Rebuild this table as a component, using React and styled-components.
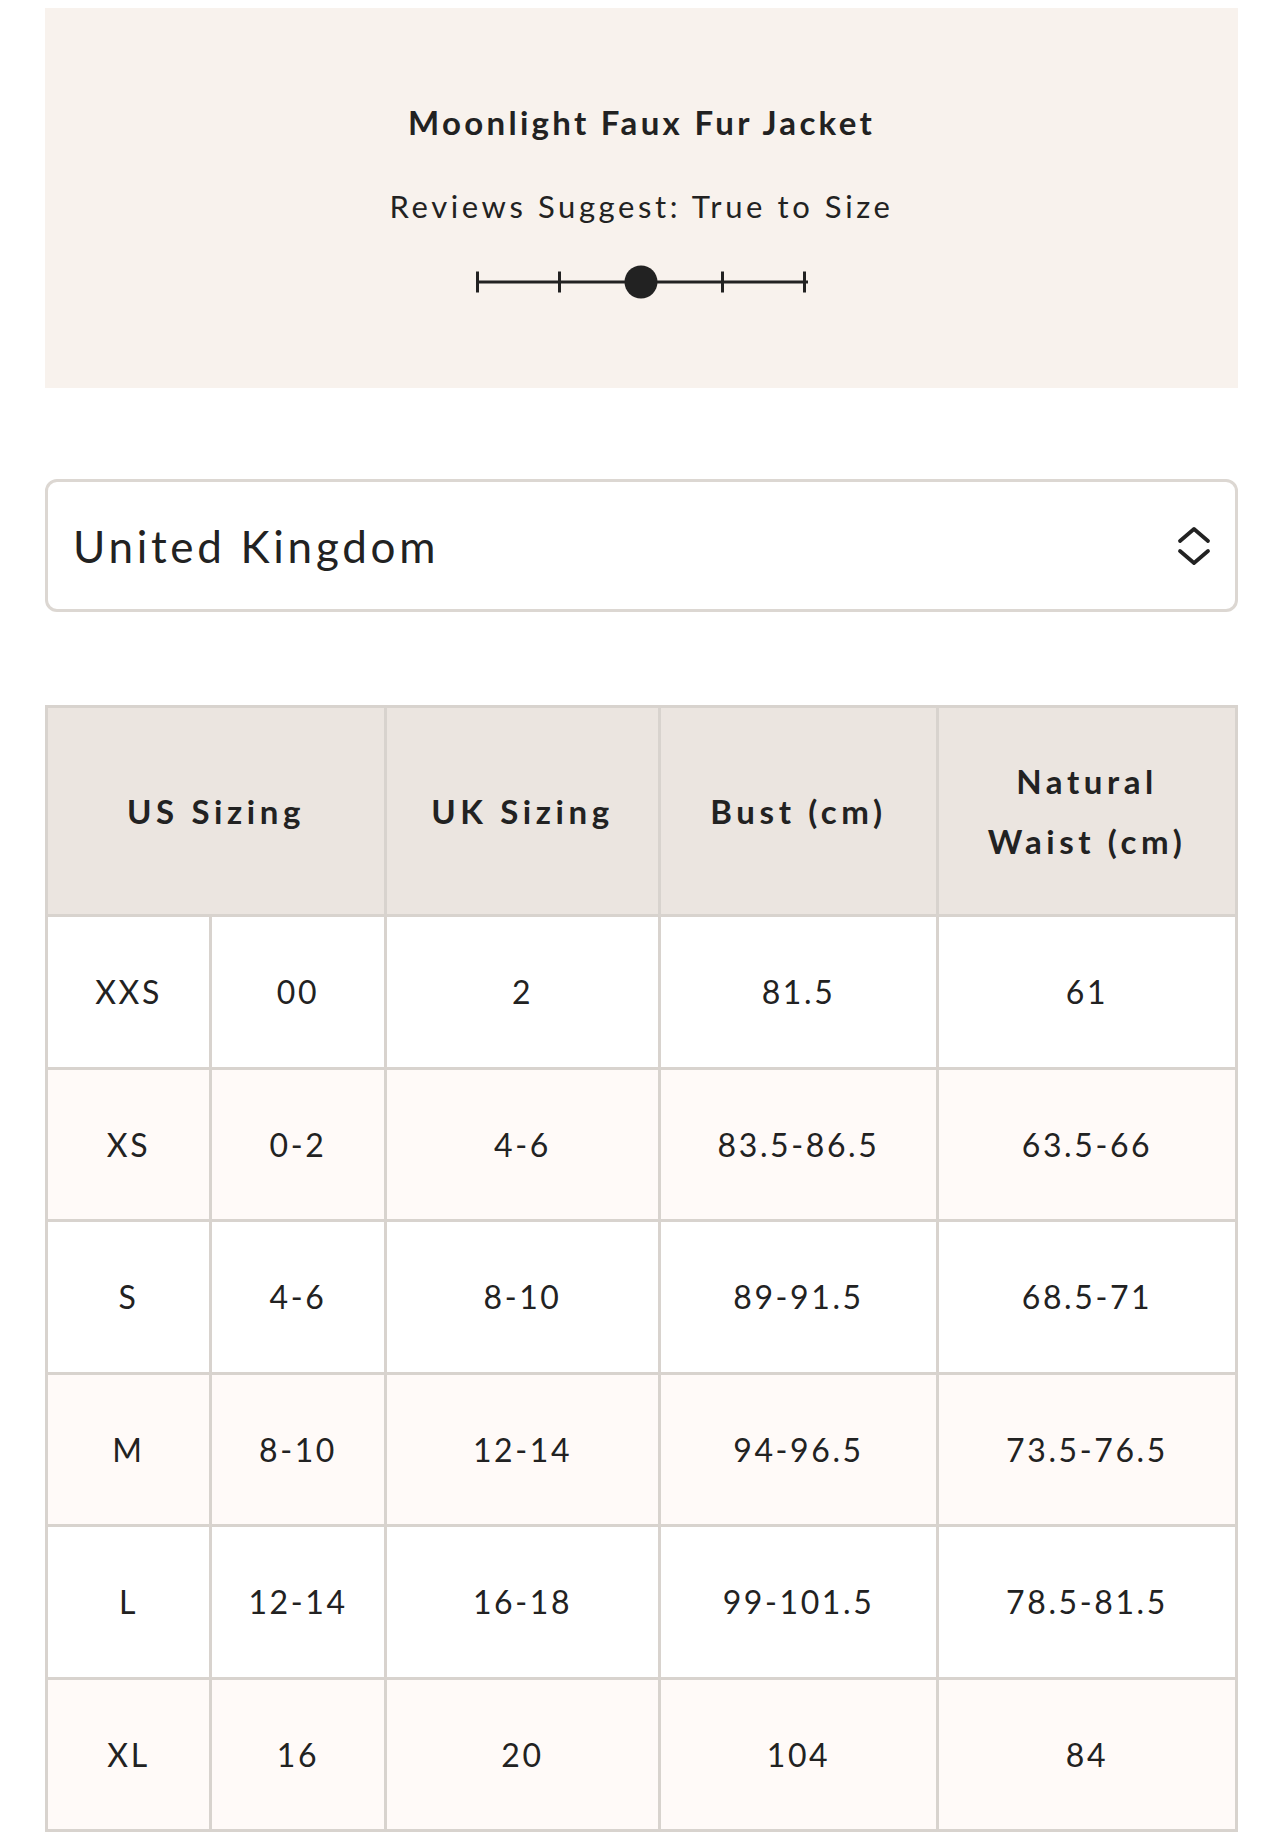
import React from 'react';
import styled, { createGlobalStyle } from 'styled-components';

const GlobalStyle = createGlobalStyle`
  body {
    margin: 0;
    background: #ffffff;
    font-family: Lato, "Open Sans", sans-serif;
    color: #222222;
  }
`;

const Page = styled.div`
  padding: 8px 46px 12px 45px;
`;

const FitPanel = styled.section`
  height: 380px;
  box-sizing: border-box;
  background: #f8f2ed;
  padding-top: 96px;
  display: flex;
  flex-direction: column;
  align-items: center;
`;

const ProductTitle = styled.h2`
  margin: 0;
  font-size: 33px;
  line-height: 36px;
  font-weight: 700;
  letter-spacing: 3.3px;
`;

const FitText = styled.p`
  margin: 48px 0 0;
  font-size: 31px;
  line-height: 36px;
  font-weight: 400;
  letter-spacing: 3.6px;
`;

const Scale = styled.div`
  margin-top: 41px;
  width: 332px;
  height: 34px;
  display: flex;
  justify-content: center;
`;

const SelectBox = styled.div`
  margin-top: 91px;
  height: 133px;
  box-sizing: border-box;
  border: 3px solid #dcd7d2;
  border-radius: 12px;
  display: flex;
  align-items: center;
  justify-content: space-between;
  padding: 0 24px 0 25px;
`;

const SelectLabel = styled.span`
  font-size: 44px;
  letter-spacing: 3.7px;
  font-weight: 400;
`;

const SizeTable = styled.table`
  margin-top: 93px;
  width: 100%;
  border-collapse: collapse;
  table-layout: fixed;
  border: 3px solid #d8d3ce;
`;

const HeadCell = styled.th`
  height: 206px;
  background: #ebe5e0;
  border: 3px solid #d8d3ce;
  font-size: 33px;
  font-weight: 700;
  letter-spacing: 4.6px;
  line-height: 60px;
  padding: 0 4px;
`;

const Cell = styled.td`
  height: 149.5px;
  background: ${p => (p.$shaded ? '#fffaf8' : '#ffffff')};
  border: 3px solid #d8d3ce;
  text-align: center;
  font-size: 32px;
  letter-spacing: 2.6px;
  padding: 0;
`;

const rows = [
  ['XXS', '00', '2', '81.5', '61'],
  ['XS', '0-2', '4-6', '83.5-86.5', '63.5-66'],
  ['S', '4-6', '8-10', '89-91.5', '68.5-71'],
  ['M', '8-10', '12-14', '94-96.5', '73.5-76.5'],
  ['L', '12-14', '16-18', '99-101.5', '78.5-81.5'],
  ['XL', '16', '20', '104', '84'],
];

function FitScale() {
  const ticks = [1.5, 83.5, 246.5, 328.5];
  return (
    <svg width="332" height="34" viewBox="0 0 332 34">
      <line x1="0" y1="17" x2="332" y2="17" stroke="#222" strokeWidth="3" />
      {ticks.map(x => (
        <line key={x} x1={x} y1="6.5" x2={x} y2="27.5" stroke="#222" strokeWidth="3" />
      ))}
      <circle cx="165" cy="17" r="16.5" fill="#222" />
    </svg>
  );
}

function UpDown() {
  return (
    <svg width="34" height="40" viewBox="0 0 34 40" fill="none" stroke="#222" strokeWidth="3.8" strokeLinecap="round" strokeLinejoin="round">
      <polyline points="3,15 17,3 31,15" />
      <polyline points="3,25 17,37 31,25" />
    </svg>
  );
}

export default function App() {
  return (
    <>
      <GlobalStyle />
      <Page>
        <FitPanel>
          <ProductTitle>Moonlight Faux Fur Jacket</ProductTitle>
          <FitText>Reviews Suggest: True to Size</FitText>
          <Scale>
            <FitScale />
          </Scale>
        </FitPanel>

        <SelectBox>
          <SelectLabel>United Kingdom</SelectLabel>
          <UpDown />
        </SelectBox>

        <SizeTable>
          <colgroup>
            <col style={{ width: 164 }} />
            <col style={{ width: 175 }} />
            <col style={{ width: 274 }} />
            <col style={{ width: 278 }} />
            <col />
          </colgroup>
          <thead>
            <tr>
              <HeadCell colSpan={2}>US Sizing</HeadCell>
              <HeadCell>UK Sizing</HeadCell>
              <HeadCell>Bust (cm)</HeadCell>
              <HeadCell>Natural<br />Waist (cm)</HeadCell>
            </tr>
          </thead>
          <tbody>
            {rows.map((r, i) => (
              <tr key={r[0]}>
                {r.map((v, j) => (
                  <Cell key={j} $shaded={i % 2 === 1}>{v}</Cell>
                ))}
              </tr>
            ))}
          </tbody>
        </SizeTable>
      </Page>
    </>
  );
}
